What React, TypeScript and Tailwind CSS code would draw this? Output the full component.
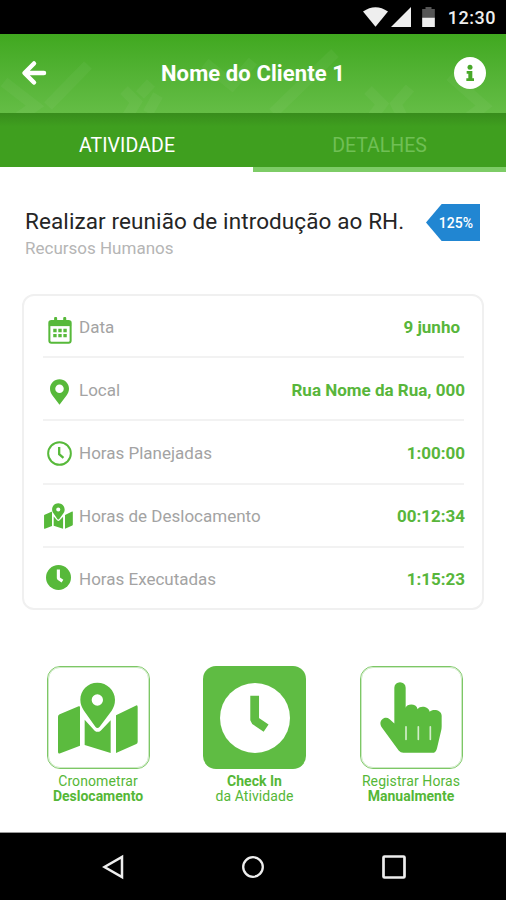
import React from 'react';

interface IconProps {
  className?: string;
}

const CalendarIcon: React.FC<IconProps> = ({ className }) => (
  <svg viewBox="98 94 70 80" className={className} fill="none">
    <rect x="101.500" y="106" width="63" height="64.500" rx="6" stroke="currentColor" strokeWidth="6" />
    <path d="M100 106h66v15h-66z" fill="currentColor" />
    <path d="M120 98v12M147 98v12" stroke="currentColor" strokeWidth="9" strokeLinecap="round" />
    <path d="M113 129h10v10h-10zM128 129h10v10h-10zM143 129h10v10h-10zM113 144h10v10h-10zM128 144h10v10h-10zM143 144h10v10h-10z" fill="currentColor" />
  </svg>
);

const PinIcon: React.FC<IconProps> = ({ className }) => (
  <svg viewBox="0 0 58 78" className={className} fill="currentColor">
    <path fillRule="evenodd" d="M29 0C13 0 0 13 0 29c0 7 3 14 7 20l22 29 22-29c4-6 7-13 7-20C58 13 45 0 29 0Zm0 16a13 13 0 1 1 0 26 13 13 0 0 1 0-26Z" />
  </svg>
);

const ClockOutlineIcon: React.FC<IconProps> = ({ className }) => (
  <svg viewBox="0 0 76 76" className={className} fill="none" stroke="currentColor" strokeWidth="6">
    <circle cx="38" cy="38" r="34.500" />
    <path d="M37 18v22l13 11" strokeWidth="7" />
  </svg>
);

const MapIcon: React.FC<IconProps> = ({ className }) => (
  <svg viewBox="88 80 240 216" className={className} fill="currentColor">
    <path d="M93 177 150 153Q154 151 154 156V271L95 294Q88 296 88 290V184Q88 179 93 177Z" />
    <path d="M168 193 198 226Q207 233 216 226L246 195V293L168 269Z" />
    <path d="M262 180 321 151Q327 148 327 155V259Q327 264 323 266L262 293Z" />
    <path fillRule="evenodd" d="M206 82C177 82 155 105 155 133C155 147 160 156 166 166L200 214Q206 222 213 214L249 166C255 156 259 147 259 133C259 105 235 82 206 82ZM206 117a17 17 0 1 1 0 34a17 17 0 0 1 0-34Z" />
  </svg>
);

const ClockIcon: React.FC<IconProps & { hand: string }> = ({ className, hand }) => (
  <svg viewBox="0 0 208 208" className={className}>
    <circle cx="104" cy="104" r="104" fill="currentColor" />
    <path d="M103 38v73l34 23" fill="none" stroke={hand} strokeWidth="26" strokeLinejoin="bevel" />
  </svg>
);

const HandIcon: React.FC<IconProps> = ({ className }) => (
  <svg viewBox="120 82 186 212" className={className}>
    <path
      fill="currentColor"
      d="M163 99A17 17 0 0 1 197 99V159C201 146 229 145 233 163C241 151 266 155 269 171C278 161 305 165 305 183V215Q305 222 303 229L291 280Q288 294 277 294H190Q182 294 176 287L124 216C114 199 133 181 149 193L163 206Z"
    />
    <path d="M198 216v38M235 216v38M271 216v38" stroke="#d2edca" strokeWidth="5" strokeLinecap="round" />
  </svg>
);

const rows = [
  { label: 'Data', value: '9 junho', icon: <CalendarIcon className="mt-1 h-[27px] w-6" />, inset: true },
  { label: 'Local', value: 'Rua Nome da Rua, 000', icon: <PinIcon className="mt-[2px] h-[26px] w-[19px]" /> },
  { label: 'Horas Planejadas', value: '1:00:00', icon: <ClockOutlineIcon className="h-[25px] w-[25px]" /> },
  { label: 'Horas de Deslocamento', value: '00:12:34', icon: <MapIcon className="-ml-[3px] -mt-[2px] h-[26px] w-[29px]" /> },
  { label: 'Horas Executadas', value: '1:15:23', icon: <ClockIcon hand="#fff" className="-ml-[3px] -mt-[5px] h-[25px] w-[25px]" /> },
];

const StatusBar = () => (
  <div className="flex h-[34px] items-center justify-end bg-black pr-[10px] text-[#eee]">
    <svg viewBox="0 0 76 60" className="h-5 w-[25px]" fill="currentColor">
      <path d="M0 13Q38-13 76 13L38 60Z" />
    </svg>
    <svg viewBox="0 0 60 60" className="ml-[3px] h-5 w-5" fill="currentColor">
      <path d="M60 0V60H0Z" />
    </svg>
    <svg viewBox="0 0 38 60" className="ml-[11px] h-5 w-[13px]">
      <path d="M0 6h10V0h18v6h10v26H0z" fill="#555" />
      <path d="M0 32h38v28H0z" fill="currentColor" />
    </svg>
    <span className="ml-[13px] text-[18px] font-medium tracking-[0.5px]">12:30</span>
  </div>
);

const Header = () => (
  <header className="relative h-[79px] overflow-hidden bg-linear-to-b from-[#40a81f] to-[#64bd45]">
    <svg viewBox="0 0 506 79" className="absolute inset-0 h-full w-full" fill="none" stroke="#fff" strokeOpacity=".04" strokeWidth="11">
      <path d="M4 48 35 72 19 83M48 72 88 31M124 56 136 68 127 83M151 49 140 61M158 61 148 79M205 29 232 51 253 27M273 79 335 19M368 56 382 70 373 82M410 54 396 70 402 82M450 42 484 72 468 84" />
    </svg>
    <div className="relative flex h-full items-center justify-between px-5 text-white">
      <button aria-label="Voltar" className="-mt-[2px] pl-[1px]">
        <svg viewBox="0 0 26 26" className="h-[26px] w-[26px]" fill="none" stroke="currentColor" strokeWidth="4.500" strokeLinecap="round" strokeLinejoin="round">
          <path d="M13 3.500 3.500 13 13 22.500M4 13h19" />
        </svg>
      </button>
      <h1 className="pl-[5px] text-[22px] font-bold tracking-[0.1px]">Nome do Cliente 1</h1>
      <svg viewBox="0 0 96 96" className="-mt-[2px] h-8 w-8">
        <circle cx="48" cy="48" r="48" fill="#fff" />
        <circle cx="48" cy="31" r="7.500" fill="#48a829" />
        <path d="M38 42h17v22h5v8H37v-8h6V50h-5z" fill="#48a829" />
      </svg>
    </div>
  </header>
);

const Tabs = () => (
  <nav className="grid h-[59px] shrink-0 grid-cols-2 text-center text-[19.500px]">
    <div className="h-[54px] bg-linear-to-b from-[#388d1c] to-[#3f9f1f] to-25% pl-[1px] pt-[18px] leading-[30px] tracking-[0.1px] text-white">ATIVIDADE</div>
    <div className="h-[59px] border-b-[5px] border-[#7dcc66] bg-linear-to-b from-[#388d1c] to-[#3f9f1f] to-25% pt-[18px] leading-[30px] text-[#70bf55]">DETALHES</div>
  </nav>
);

interface ActionProps {
  children: React.ReactNode;
  first: string;
  second: string;
  filled?: boolean;
}

const Action: React.FC<ActionProps> = ({ children, first, second, filled }) => (
  <button className="flex w-[120px] flex-col items-center text-[#55b737]">
    <span className={`flex h-[103px] w-[103px] items-center justify-center rounded-[13px] ${filled ? 'bg-[#5fbc43] text-white' : 'border-[1.500px] border-[#7dc766] text-[#5bbb3e] outline outline-[#cdeac4] -outline-offset-2'}`}>
      {children}
    </span>
    <span className={`mt-1 whitespace-nowrap text-[14px] leading-4 ${filled ? 'font-bold' : 'tracking-[0.1px]'}`}>{first}</span>
    <span className={`whitespace-nowrap text-[14px] leading-[15px] ${filled ? 'tracking-[0.1px]' : 'font-bold'}`}>{second}</span>
  </button>
);

const App = () => (
  <div className="flex h-[900px] w-[506px] flex-col overflow-hidden bg-white font-['Roboto',sans-serif]">
    <StatusBar />
    <Header />
    <Tabs />

    <main className="flex-1">
      {/* Activity title and progress tag */}
      <section className="flex h-[122px] items-start justify-between pl-[25px] pr-[26px] pt-8">
        <div>
          <h2 className="whitespace-nowrap text-[22.500px] leading-[35px] tracking-[0.1px] text-[#252525]">Realizar reunião de introdução ao RH.</h2>
          <p className="text-[17px] leading-[18px] text-[#b5b5b5]">Recursos Humanos</p>
        </div>
        <div className="flex h-[37px] w-[54px] items-center justify-end bg-[#2186d2] pr-[7px] pt-[1px] text-[14px] font-medium text-white [clip-path:polygon(0_50%,29%_0,100%_0,100%_100%,29%_100%)]">125%</div>
      </section>

      <section className="mx-[22px] h-[316px] rounded-xl border-2 border-[#f0f0f0] pl-[19px] pr-[18px]">
        {rows.map((row) => (
          <div key={row.label} className="flex h-[63.300px] items-center border-b-2 border-[#f2f2f2] pt-1 text-[17px] first:h-[62px] last:border-b-0 last:pt-0">
            <span className="flex w-[33px] shrink-0 justify-center text-[#57b93a]">{row.icon}</span>
            <span className="ml-[3px] text-[#a3a3a3]">{row.label}</span>
            <span className={`-mr-[1px] ml-auto font-bold text-[#58b63b] ${row.inset ? 'pr-[5px]' : ''}`}>{row.value}</span>
          </div>
        ))}
      </section>

      <section className="mt-14 flex justify-between pl-[38px] pr-[35px]">
        <Action first="Cronometrar" second="Deslocamento">
          <MapIcon className="h-[72px] w-20" />
        </Action>
        <Action first="Check In" second="da Atividade" filled>
          <ClockIcon hand="#5fbc43" className="h-[70px] w-[70px]" />
        </Action>
        <Action first="Registrar Horas" second="Manualmente">
          <HandIcon className="h-[71px] w-[62px]" />
        </Action>
      </section>
    </main>

    <footer className="flex h-[68px] shrink-0 items-center justify-between border-t border-[#999] bg-black pl-[102px] pr-[99px] text-[#eee]">
      <svg viewBox="0 0 22 26" className="h-[26px] w-[22px]" fill="none" stroke="currentColor" strokeWidth="2.500">
        <path d="M20 3v20L2.500 13Z" />
      </svg>
      <svg viewBox="0 0 24 24" className="h-6 w-6" fill="none" stroke="currentColor" strokeWidth="2.300">
        <circle cx="12" cy="12" r="9.800" />
      </svg>
      <svg viewBox="0 0 26 26" className="h-[26px] w-[26px]" fill="none" stroke="currentColor" strokeWidth="2.700">
        <rect x="2.500" y="2.500" width="21" height="21" rx="1" />
      </svg>
    </footer>
  </div>
);

export default App;
